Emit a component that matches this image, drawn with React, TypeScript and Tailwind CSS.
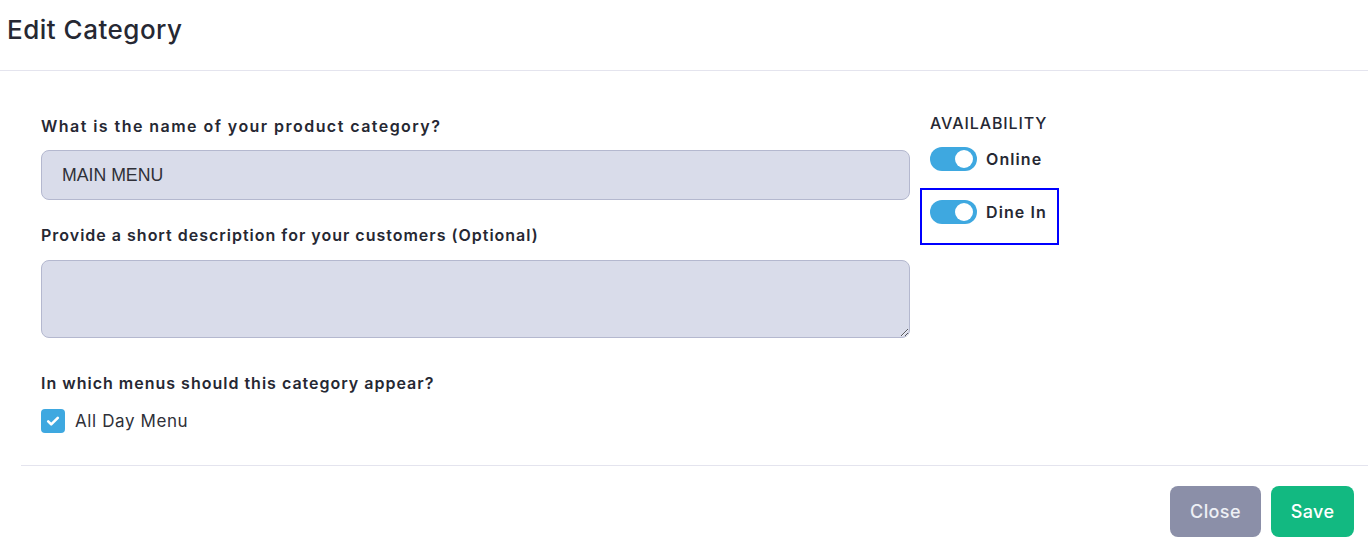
import React from 'react';

function Toggle({ on = true }: { on?: boolean }) {
  return (
    <span
      className={`relative inline-flex h-[24px] w-[47px] shrink-0 items-center rounded-full ${
        on ? 'bg-[#3ea8e0]' : 'bg-[#c7cad8]'
      }`}
    >
      <span
        className={`absolute top-[3px] h-[18px] w-[18px] rounded-full bg-white ${
          on ? 'right-[4px]' : 'left-[4px]'
        }`}
      />
    </span>
  );
}

export default function App() {
  const font = { fontFamily: 'Inter, "Noto Sans", sans-serif' };
  return (
    <div className="min-h-screen w-full bg-white text-[#262833]" style={font}>
      <div className="h-[71px] border-b border-[#e4e4ee] pl-[7px] pt-[13px]">
        <h1 className="text-[26px] font-medium leading-[34px] tracking-[0.5px]">Edit Category</h1>
      </div>

      <div className="ml-[21px]">
        <div className="flex pl-[20px]">
          <div className="w-[869px] pt-[43px]">
            <label className="block text-[16px] font-semibold leading-[24px] tracking-[1.45px]">
              What is the name of your product category?
            </label>
            <input
              defaultValue="MAIN MENU"
              className="mt-[12px] block h-[50px] w-full rounded-[8px] border border-[#b4b8cf] bg-[#d9dcea] px-[20px] text-[17.7px] text-[#2f3038] outline-none"
              style={{ fontFamily: '"Liberation Sans", Arial, sans-serif' }}
            />

            <label className="mt-[23px] block text-[16px] font-semibold leading-[24px] tracking-[1px]">
              Provide a short description for your customers (Optional)
            </label>
            <textarea className="mt-[13px] block h-[78px] w-full rounded-[8px] border border-[#b4b8cf] bg-[#d9dcea] px-[20px] py-[12px] text-[16px] outline-none" />

            <label className="mt-[33px] block text-[16px] font-semibold leading-[24px] tracking-[1px]">
              In which menus should this category appear?
            </label>
            <div className="mt-[14px] flex h-[24px] items-center gap-[10px]">
              <span className="flex h-[24px] w-[24px] items-center justify-center rounded-[4px] bg-[#3ea8e0]">
                <svg width="16" height="16" viewBox="0 0 16 16" fill="none">
                  <path d="M3.2 8.4l3 3L12.8 4.8" stroke="white" strokeWidth="2.6" strokeLinecap="round" strokeLinejoin="round" />
                </svg>
              </span>
              <span className="text-[17px] leading-[24px] tracking-[0.6px] text-[#2f3038]">All Day Menu</span>
            </div>
            <div className="h-[32px]" />
          </div>

          <div className="ml-[10px] pt-[40px]">
            <div className="pl-[10px] text-[16px] font-medium leading-[24px] tracking-[0.9px]">AVAILABILITY</div>
            <div className="mt-[12px] flex items-center gap-[9px] pl-[10px]">
              <Toggle />
              <span className="text-[16px] font-semibold leading-[24px] tracking-[1.1px]">Online</span>
            </div>
            <div className="mt-[17px] h-[57px] w-[139px] border-2 border-[#0000ff] pl-[8px] pt-[10px]">
              <div className="flex items-center gap-[9px]">
                <Toggle />
                <span className="text-[16px] font-semibold leading-[24px] tracking-[1.1px]">Dine In</span>
              </div>
            </div>
          </div>
        </div>

        <div className="flex justify-end gap-[10px] border-t border-[#e4e4ee] pr-[14px] pt-[20px]">
          <button className="h-[51px] w-[91px] rounded-[8px] bg-[#8b8fa8] text-[18px] font-medium tracking-[0.4px] text-[#eef0f5]">
            Close
          </button>
          <button className="h-[51px] w-[83px] rounded-[8px] bg-[#12b981] text-[18px] font-medium tracking-[0.4px] text-white">
            Save
          </button>
        </div>
      </div>
    </div>
  );
}
